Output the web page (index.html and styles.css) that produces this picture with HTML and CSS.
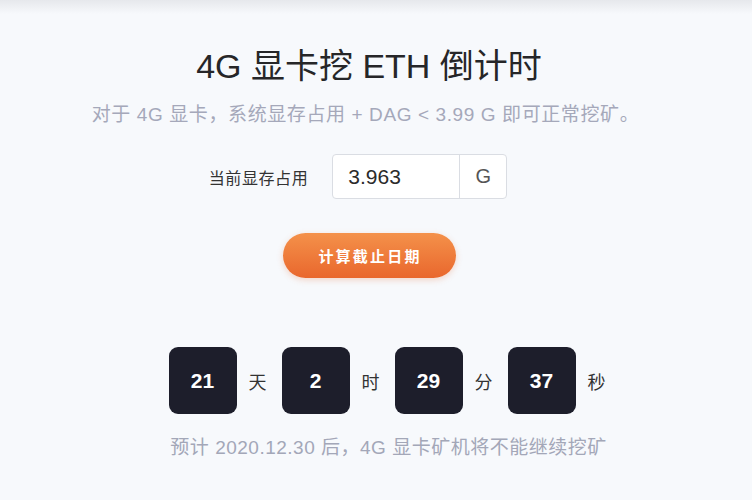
FILE: index.html
```html
<!DOCTYPE html>
<html lang="zh-CN">
<head>
<meta charset="utf-8">
<title>4G 显卡挖 ETH 倒计时</title>
<link rel="stylesheet" href="styles.css">
</head>
<body>
<div class="topbar"></div>
<main class="page">
  <h1 class="title">4G 显卡挖 ETH 倒计时</h1>
  <p class="subtitle">对于 4G 显卡，系统显存占用 + DAG &lt; 3.99 G 即可正常挖矿。</p>
  <div class="form-row">
    <label class="label">当前显存占用</label>
    <div class="input-group">
      <span class="input-value">3.963</span>
      <span class="input-suffix">G</span>
    </div>
  </div>
  <div class="btn-row">
    <button class="btn">计算截止日期</button>
  </div>
  <div class="countdown">
    <div class="cell">21</div><span class="unit">天</span>
    <div class="cell">2</div><span class="unit">时</span>
    <div class="cell">29</div><span class="unit">分</span>
    <div class="cell">37</div><span class="unit">秒</span>
  </div>
  <p class="note">预计 2020.12.30 后，4G 显卡矿机将不能继续挖矿</p>
</main>
</body>
</html>
```
FILE: styles.css
```css
* { box-sizing: border-box; }
html, body {
  margin: 0;
  padding: 0;
  background: #f7f9fc;
  font-family: "Liberation Sans", "Noto Sans CJK SC", sans-serif;
  width: 752px;
  height: 500px;
  overflow: hidden;
}
.topbar {
  height: 14px;
  background: linear-gradient(#e6e8ec, #f7f9fc);
}
.page {
  display: flex;
  flex-direction: column;
  align-items: center;
}
.title {
  margin: 32px 0 0 -14px;
  font-size: 34px;
  font-weight: 400;
  line-height: 40px;
  color: #262628;
}
.subtitle {
  margin: 18px 0 0 -21px;
  font-size: 19px;
  letter-spacing: 0.6px;
  line-height: 22px;
  color: #a5a8ba;
}
.form-row {
  margin: 28px 0 0 -36px;
  display: flex;
  align-items: center;
  gap: 24px;
}
.label {
  font-size: 16px;
  color: #333;
  letter-spacing: 0.6px;
}
.input-group {
  display: flex;
  width: 175px;
  height: 45px;
  border: 1px solid #dadde3;
  border-radius: 4px;
  background: #fff;
}
.input-value {
  flex: 1;
  display: flex;
  align-items: center;
  padding-left: 15px;
  font-size: 21px;
  color: #2b2b2b;
  border-right: 1px solid #dadde3;
}
.input-suffix {
  width: 46px;
  display: flex;
  align-items: center;
  justify-content: center;
  font-size: 20px;
  color: #555;
}
.btn-row {
  margin: 34px 0 0 -14px;
}
.btn {
  width: 173px;
  height: 45px;
  border: none;
  border-radius: 23px;
  background: linear-gradient(180deg, #f4914a 0%, #e9672d 100%);
  box-shadow: 0 2px 6px rgba(233, 103, 45, 0.25);
  color: #fff;
  font-family: "Liberation Sans", "Noto Sans CJK SC", sans-serif;
  font-size: 15px;
  font-weight: 700;
  letter-spacing: 2.2px;
  padding-left: 8px;
}
.countdown {
  margin: 69px 0 0 22px;
  display: flex;
  align-items: center;
}
.cell {
  width: 68px;
  height: 67px;
  border-radius: 9px;
  background: #1d1e2b;
  color: #fff;
  font-size: 21px;
  font-weight: 700;
  display: flex;
  align-items: center;
  justify-content: center;
}
.unit {
  margin: 0 15px 0 12px;
  font-size: 18px;
  color: #333;
}
.unit:last-child { margin-right: 0; }
.note {
  margin: 22px 0 0 25px;
  font-size: 19px;
  letter-spacing: 0.5px;
  line-height: 24px;
  color: #a3a7b8;
}
```
